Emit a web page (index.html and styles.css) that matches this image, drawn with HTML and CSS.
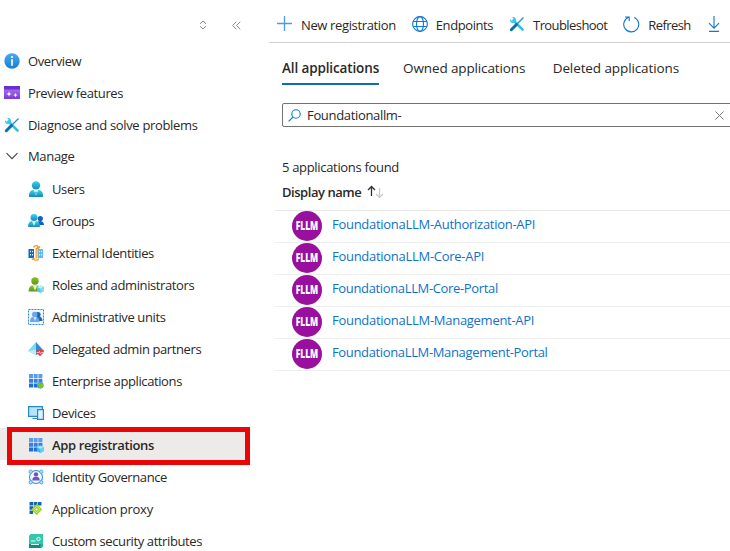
FILE: index.html
```html
<!DOCTYPE html>
<html lang="en">
<head>
<meta charset="utf-8">
<title>App registrations</title>
<link rel="stylesheet" href="styles.css">
</head>
<body>
<svg width="0" height="0" class="defs" aria-hidden="true">
  <defs>
    <linearGradient id="cyan" x1="0" y1="0" x2="0" y2="1"><stop offset="0" stop-color="#32d4f5"/><stop offset="1" stop-color="#198ab3"/></linearGradient>
    <linearGradient id="blue" x1="0" y1="0" x2="0" y2="1"><stop offset="0" stop-color="#4aa8ee"/><stop offset="1" stop-color="#1580d8"/></linearGradient>
    <linearGradient id="purple" x1="0" y1="0" x2="0" y2="1"><stop offset="0" stop-color="#b77af4"/><stop offset="1" stop-color="#773adc"/></linearGradient>
    <linearGradient id="green" x1="0" y1="0" x2="0" y2="1"><stop offset="0" stop-color="#86c51d"/><stop offset="1" stop-color="#5e9624"/></linearGradient>
    <symbol id="tools" viewBox="0 0 16 16">
      <path d="M4.500 4.500 13.600 13.600" stroke="#32bedd" stroke-width="2.600" stroke-linecap="round"/>
      <path d="M1 3.200 3.300 5.200 5.200 3.400 3.100 1.100C5.800.3 7.600 2.500 6.800 5L5 6.800C2.500 7.500.5 5.700 1 3.200Z" fill="#32c8e8"/>
      <path d="M14.500 1.500 8 8" stroke="#258ec0" stroke-width="1.300"/>
      <path d="M7.300 8.700 2.300 13.700" stroke="#0f6cae" stroke-width="3" stroke-linecap="round"/>
    </symbol>
    <symbol id="grid" viewBox="0 0 16 16">
      <path d="M1 1h4v4H1zM5.700 1h4v4h-4zM10.400 1h4v4h-4z" fill="#5a9bea"/>
      <path d="M1 5.700h4v4H1zM5.700 5.700h4v4h-4zM10.400 5.700h4v4h-4z" fill="#3880df"/>
      <path d="M1 10.400h4v4H1zM5.700 10.400h4v4h-4zM10.400 10.400h4v4h-4z" fill="#1f6fd2"/>
    </symbol>
  </defs>
</svg>
<div class="page">
  <nav class="sidebar">
    <div class="sidebar-tools">
      <svg width="8" height="10" viewBox="0 0 8 10"><path d="M1 3.800 4 1l3 2.800M1 6.200 4 9l3-2.800" class="thin"/></svg>
      <svg width="9" height="9" viewBox="0 0 9 9"><path d="M4.300.7.700 4.500 4.300 8.300M8.200.7 4.600 4.500 8.200 8.300" class="thin"/></svg>
    </div>
    <a class="item"><svg class="ico" viewBox="0 0 16 16"><circle cx="8" cy="8" r="7.700" fill="url(#blue)"/><circle cx="8" cy="4" r="1.100" fill="#fff"/><path d="M7.200 6.200h1.700v6.500H7.200z" fill="#fff"/></svg><span>Overview</span></a>
    <a class="item"><svg class="ico" viewBox="0 0 16 16"><path d="M0 1h16v13H0z" fill="url(#purple)"/><path d="M0 1h16v3.500H0z" fill="#6b2fd0"/><path d="M5 6.200 5.700 8.300 7.800 9 5.700 9.700 5 11.800 4.300 9.700 2.200 9 4.300 8.300ZM11.400 7.800l.6 1.700 1.700.6-1.700.6-.6 1.700-.6-1.700-1.700-.6 1.700-.6Z" fill="#fff"/></svg><span>Preview features</span></a>
    <a class="item"><svg class="ico"><use href="#tools"/></svg><span class="wide">Diagnose and solve problems</span></a>
    <a class="item group"><svg class="ico" viewBox="0 0 16 16"><path d="m2.500 5.200 5.500 5.500 5.500-5.500" fill="none" stroke="#444" stroke-width="1.100"/></svg><span class="wide">Manage</span></a>
    <div class="children">
      <a class="item"><svg class="ico" viewBox="0 0 16 16"><path d="M1 16v-2.500C1.500 10.500 3 9 5.500 9h5C13 9 14.500 10.500 15 13.500V16Z" fill="url(#cyan)"/><path d="M5.700 9 8 14.500 10.300 9Z" fill="#e8fbff"/><path d="m8 10 .8 1.500L8 14l-.8-2.500Z" fill="#27a8ce"/><circle cx="8" cy="4.400" r="4.200" fill="url(#cyan)"/></svg><span>Users</span></a>
      <a class="item"><svg class="ico" viewBox="0 0 16 16"><path d="M9 12c0-3 1-4 3-4s4 1.500 4 4Z" fill="#0b62c4"/><circle cx="12.300" cy="5.500" r="2.600" fill="#0b62c4"/><path d="M0 14c0-4 1.500-6 4-6h4c2.500 0 4 2 4 6Z" fill="url(#cyan)"/><path d="m4 8 2 5 2-5Z" fill="#d8f6fc"/><circle cx="6" cy="4.500" r="3.500" fill="url(#cyan)"/></svg><span>Groups</span></a>
      <a class="item"><svg class="ico" viewBox="0 0 16 16"><path d="M.5 4H6v9H.5z" fill="#0f69bd"/><path d="M9.500 4H15v9H9.500z" fill="#63b9ef"/><path d="M2 5.700h1v1.600H2zm2 0h1v1.600H4zM2 9h1v1.600H2zm2 0h1v1.600H4zM11 5.700h1v1.600h-1zm2 0h1v1.600h-1zM11 9h1v1.600h-1zm2 0h1v1.600h-1z" fill="#d9f1ff"/><path d="M5.500 2.500C6 .2 10-.2 10.500 2.500M9 1.800l1.500 1.400L12 1.500M10 3.500H8.200v10M5.500 13.500c.7 2.300 4.700 2.300 5.200 0M4 15l1.300-1.700L7 14.600" fill="none" stroke="#f7941d" stroke-width="1.200"/></svg><span>External Identities</span></a>
      <a class="item"><svg class="ico" viewBox="0 0 16 16"><path d="M.5 14.500c.3-4 1.500-6 4-6h5c2.500 0 3.600 2 4 6Z" fill="url(#green)"/><path d="m4.800 8.500 2.200 5 2.200-5Z" fill="#eaf7cf"/><circle cx="7" cy="4" r="3.700" fill="url(#green)"/><path d="m12.500 8.500 3.500 1.600v4L12.500 16 9 14.100v-4Z" fill="#50c8f0"/><path d="m12.500 8.500 3.500 1.600-3.500 1.700L9 10.100Z" fill="#b5f0fb"/><path d="M12.500 11.800V16l3.500-1.900v-4Z" fill="#7fdcf5"/></svg><span>Roles and administrators</span></a>
      <a class="item"><svg class="ico" viewBox="0 0 16 16"><path d="M.5.500h15v15H.5z" fill="#eef7ff" stroke="#2c88d8" stroke-dasharray="2 1"/><path d="M8 12c0-3 1-4.500 3-4.500s3.500 2 3.500 4.500Z" fill="#1767b5"/><circle cx="10" cy="5.500" r="2.600" fill="#1767b5"/><path d="M2 13c0-3.500 1-5 3-5h3c2.300 0 3.500 2 3.500 5Z" fill="#6aa5ef"/><path d="m5.500 8 1.500 4L8.500 8Z" fill="#d7e9ff"/><circle cx="6.700" cy="5.500" r="2.700" fill="#6aa5ef"/></svg><span>Administrative units</span></a>
      <a class="item"><svg class="ico" viewBox="0 0 16 16"><path d="M8 1 0 10l8 4Z" fill="#79daf5"/><path d="m8 1 8 9-8 4Z" fill="#2b8fcc"/><path d="m0 10 8-1.500V14Z" fill="#b4edfb"/><path d="M12 15.300 8.500 11.800C7.200 9.500 10 7.500 12 9.500c2-2 5 0 3.500 2.300Z" fill="#ed3545"/><path d="M8.500 11.600h2l.8-1.200 1.200 2.500 1-1.500H16" fill="none" stroke="#fff" stroke-width=".7"/></svg><span>Delegated admin partners</span></a>
      <a class="item"><svg class="ico" viewBox="0 0 16 16"><use href="#grid" width="16" height="16"/><circle cx="12.300" cy="12.300" r="3.300" fill="#46a6d9"/><path d="M9.300 11c1.500-2 3-.8 3.500.2 1-.4 2.300-.1 2.700 1.200-.4 2-1.800 3.200-3.500 3.200 0-2-2.500-2-2.700-4.600Z" fill="#79c527"/></svg><span>Enterprise applications</span></a>
      <a class="item"><svg class="ico" viewBox="0 0 16 16"><path d="M.6 1.600h13.800v9.800H.6z" fill="#b8e4fb" stroke="#2886ca" stroke-width="1.200"/><path d="M4.500 13.500h5" stroke="#2886ca"/><path d="M9.600 4.600h5.800v9.800H9.600z" fill="#dbf3ff" stroke="#2886ca" stroke-width="1.200"/></svg><span>Devices</span></a>
      <a class="item selected"><svg class="ico" viewBox="0 0 16 16"><use href="#grid" width="16" height="16"/><path d="m12.300 8.500 3.500 1.700v3.900L12.300 16l-3.500-1.900v-3.900Z" fill="#35b9e9"/><path d="m12.300 8.500 3.500 1.700-3.500 1.800-3.500-1.800Z" fill="#a0eafa"/><path d="M12.300 12v4l3.500-1.900v-3.900Z" fill="#62d3f4"/></svg><span>App registrations</span></a>
      <a class="item"><svg class="ico" viewBox="0 0 16 16"><circle cx="8" cy="8" r="6.500" fill="#eefaff" stroke="#3690d3" stroke-width="1.100"/><g fill="#a9e5f7" stroke="#3690d3" stroke-width=".7"><circle cx="2.700" cy="2.700" r="1.700"/><circle cx="13.300" cy="2.700" r="1.700"/><circle cx="2.700" cy="13.300" r="1.700"/><circle cx="13.300" cy="13.300" r="1.700"/></g><circle cx="8" cy="5.400" r="2.200" fill="#7650c9"/><path d="M4.300 11.500c0-2.700 1.200-3.700 3.700-3.700s3.700 1 3.700 3.700Z" fill="#7650c9"/></svg><span>Identity Governance</span></a>
      <a class="item"><svg class="ico" viewBox="0 0 16 16"><path d="M1.500 1h3.600v3.600H1.500zm4.200 0h3.600v3.600H5.700zm4.200 0h3.600v3.600H9.900zM1.500 5.200h3.600v3.600H1.500zm4.200 0h3.600v3.600H5.700zM1.500 9.400h3.600V13H1.500z" fill="#1264b8"/><path d="m8.700 2.900 5.500 5.500-5.500 5.500-5.500-5.500Z" fill="#9bc91d"/><path d="m8.700 5 3.400 3.400-3.400 3.400-3.400-3.400Z" fill="none" stroke="#e6f6b5" stroke-width=".8"/><path d="M8.700 7v2.800M7.300 8.400h2.800" stroke="#f0fbd5" stroke-width=".8"/></svg><span class="wider">Application proxy</span></a>
      <a class="item"><svg class="ico" viewBox="0 0 16 16"><path d="M3 1h12v12.500L13.500 15H1V3Z" fill="#27b8a0"/><path d="M1 4h11.500v11H1z" fill="#128d7c"/><path d="M1 3.500 3 1h12v10H1Z" fill="#36c5ad"/><path d="M3 8h4.500M3 11.500h8" stroke="#e4fff9" stroke-width="1.200"/><circle cx="10.500" cy="6" r="1.700" fill="none" stroke="#e4fff9"/></svg><span>Custom security attributes</span></a>
    </div>
    <div class="marker"></div>
  </nav>
  <main class="content">
    <div class="toolbar">
      <svg width="16" height="16" viewBox="0 0 16 16"><path d="M7.500 0v15M0 7.500h15" stroke="#4c9be0" fill="none" stroke-width="1.300"/></svg><span class="t-new">New registration</span>
      <svg width="16" height="16" viewBox="0 0 16 16" class="line"><circle cx="8" cy="8" r="7.400"/><ellipse cx="8" cy="8" rx="3.500" ry="7.400"/><path d="M1.200 5.500h13.600M1.200 10.500h13.600"/></svg><span class="t-endpoints">Endpoints</span>
      <svg width="16" height="16"><use href="#tools"/></svg><span class="t-trouble">Troubleshoot</span>
      <svg width="17" height="17" viewBox="0 0 17 17" class="line"><path d="M11.200 1.500A7.500 7.500 0 1 1 5.800 1.300M2 1h4.200v4.200"/></svg><span class="t-refresh">Refresh</span>
      <svg width="12" height="16" viewBox="0 0 12 16" class="line"><path d="M6 0v12M1 7.200l5 5 5-5M1 15.400h10"/></svg>
    </div>
    <div class="tabs"><span class="tab active">All applications</span><span class="tab">Owned applications</span><span class="tab last">Deleted applications</span></div>
    <div class="search">
      <svg width="13" height="13" viewBox="0 0 13 13" class="line"><circle cx="8" cy="5" r="4.200"/><path d="M5 8 .6 12.400"/></svg>
      <span class="query">Foundationallm-</span>
      <svg width="9" height="9" viewBox="0 0 9 9" class="clear"><path d="m.5.500 8 8m0-8-8 8"/></svg>
    </div>
    <div class="count">5 applications found</div>
    <div class="heading"><span>Display name</span><svg width="17" height="14" viewBox="0 0 17 14"><path d="M4.500 11V1.500M1 5l3.500-3.500L8 5" fill="none" stroke="#323130" stroke-width="1.300"/><path d="M12.500 3v9.500M9 9l3.500 3.500L16 9" fill="none" stroke="#c8c8c8" stroke-width="1.200"/></svg></div>
    <div class="list">
      <div class="row"><span class="avatar"><b>FLLM</b></span><a>FoundationaLLM-Authorization-API</a></div>
      <div class="row"><span class="avatar"><b>FLLM</b></span><a>FoundationaLLM-Core-API</a></div>
      <div class="row"><span class="avatar"><b>FLLM</b></span><a class="portal">FoundationaLLM-Core-Portal</a></div>
      <div class="row"><span class="avatar"><b>FLLM</b></span><a>FoundationaLLM-Management-API</a></div>
      <div class="row"><span class="avatar"><b>FLLM</b></span><a class="portal">FoundationaLLM-Management-Portal</a></div>
    </div>
  </main>
</div>
</body>
</html>
```
FILE: styles.css
```css
* { box-sizing: border-box; }
body { margin: 0; background: #fff; color: #292827; font: 13px/18px "Open Sans", "Noto Sans", sans-serif; letter-spacing: -0.25px; overflow: hidden; }
.defs { position: absolute; }
svg { flex: none; display: block; }
span, a, b { white-space: nowrap; }
.page { display: flex; width: 730px; height: 551px; overflow: hidden; }
.sidebar { position: relative; width: 269px; flex: none; letter-spacing: -0.39px; }
.sidebar-tools { height: 45px; padding: 5px 0 0 199px; display: flex; align-items: center; gap: 25px; }
.thin { fill: none; stroke: #888; stroke-width: 1; }
.item { display: flex; align-items: center; height: 32px; padding-left: 4px; gap: 8px; }
.wide { letter-spacing: -0.33px; }
.wider { letter-spacing: -0.28px; }
.item.group { padding-bottom: 2px; }
.ico { width: 16px; height: 16px; }
.children .item { padding-left: 28px; }
.children .item.selected { width: 250px; margin: -1px 0 1px; padding-top: 2px; background: #edebe9; font-weight: 600; letter-spacing: -0.36px; }
.marker { position: absolute; left: 7px; top: 427px; width: 243px; height: 38px; border: 5px solid #ea0606; }
.content { flex: 1; min-width: 0; }
.line { fill: none; stroke: #0f78d4; stroke-width: 1.1; }
.toolbar { height: 43px; padding: 6px 0 0 8px; display: flex; align-items: center; gap: 8px; border-bottom: 1px solid #d2d0ce; }
.toolbar span { margin-right: 8px; padding-top: 2px; }
.t-new { letter-spacing: -0.36px; }
.t-endpoints { letter-spacing: -0.42px; }
.t-trouble, .t-refresh { letter-spacing: -0.58px; }
.toolbar .t-refresh { margin-right: 9px; }
.tabs { display: flex; gap: 24px; height: 42px; margin-left: 13px; }
.tab { padding-top: 16px; font-size: 13.5px; letter-spacing: -0.13px; }
.tab.active { border-bottom: 2px solid #0f6cbd; font-weight: 600; }
.tab.last { margin-left: 3.5px; letter-spacing: -0.1px; }
.search { display: flex; align-items: center; height: 24px; margin: 18px -8px 0 13px; padding: 0 13px 0 5px; border: 1px solid #75736f; border-radius: 2px; gap: 6px; }
.query { letter-spacing: -0.33px; }
.clear { margin-left: auto; fill: none; stroke: #777; }
.count { margin: 31px 0 0 13px; letter-spacing: -0.32px; }
.heading { display: flex; align-items: center; height: 18px; margin: 7px 0 0 13px; font-weight: 600; letter-spacing: -0.46px; gap: 6px; }
.list { margin: 9px 0 0 6px; border-top: 1px solid #e8e8e8; }
.row { height: 32px; display: flex; padding-left: 17px; gap: 10px; border-bottom: 1px solid #ededed; }
.row a { color: #0f72c9; padding-top: 4px; letter-spacing: -0.28px; }
.row a.portal { letter-spacing: -0.35px; }
.avatar { display: flex; align-items: center; justify-content: center; width: 30px; height: 30px; border-radius: 50%; background: #990f9e; color: #fff; flex: none; }
.avatar b { font: 800 12px/14px "Open Sans", sans-serif; letter-spacing: 0; transform: scaleX(.7); }
```
